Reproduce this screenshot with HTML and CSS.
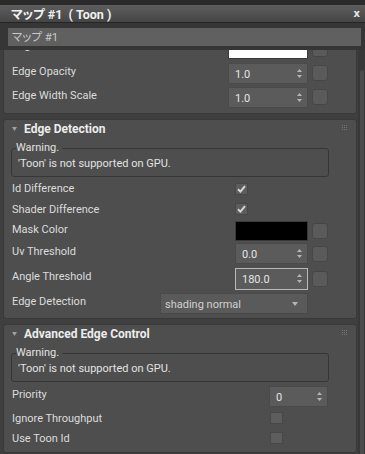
FILE: index.html
```html
<!DOCTYPE html>
<html>
<head>
<meta charset="utf-8">
<link rel="stylesheet" href="styles.css">
</head>
<body>
<div class="win">
  <div class="topstrip"></div>
  <div class="titlebar">
    <span class="title">マップ #1 &nbsp;( Toon )</span>
    <span class="close">x</span>
  </div>
  <div class="namebar"><div class="namefield">マップ #1</div></div>
  <div class="scrollwrap">
    <div class="viewport">
      <div class="panels">
        <section class="panel p1">
          <div class="row h24 up cut"><span class="lbl">Edge Color</span><div class="ctl"><div class="swatch white w80"></div><div class="btn"></div></div></div>
          <div class="row h24 up"><span class="lbl">Edge Opacity</span><div class="ctl"><div class="spin w80"><span>1.0</span><svg class="arr" width="5" height="9" viewBox="0 0 5 9"><polygon points="2.5,0 5,3 0,3" fill="#b5b5b5"/><polygon points="0,6 5,6 2.5,9" fill="#b5b5b5"/></svg></div><div class="btn"></div></div></div>
          <div class="row h24 up"><span class="lbl">Edge Width Scale</span><div class="ctl"><div class="spin w80"><span>1.0</span><svg class="arr" width="5" height="9" viewBox="0 0 5 9"><polygon points="2.5,0 5,3 0,3" fill="#b5b5b5"/><polygon points="0,6 5,6 2.5,9" fill="#b5b5b5"/></svg></div><div class="btn"></div></div></div>
        </section>

        <section class="panel p2">
          <div class="phead"><svg class="tri" width="5" height="4" viewBox="0 0 5 4"><polygon points="0,0 5,0 2.5,4" fill="#a0a0a0"/></svg><span class="ptitle">Edge Detection</span><svg class="grip" width="6" height="6" viewBox="0 0 6 6"><g fill="#767676"><rect x="0" y="0" width="1" height="1"/><rect x="2" y="0" width="1" height="1"/><rect x="4" y="0" width="1" height="1"/><rect x="0" y="2" width="1" height="1"/><rect x="2" y="2" width="1" height="1"/><rect x="4" y="2" width="1" height="1"/><rect x="0" y="4" width="1" height="1"/><rect x="2" y="4" width="1" height="1"/><rect x="4" y="4" width="1" height="1"/></g></svg></div>
          <fieldset class="warn"><legend>Warning.</legend><p>'Toon' is not supported on GPU.</p></fieldset>
          <div class="row h21"><span class="lbl">Id Difference</span><div class="ctl w93"><div class="chk"><svg width="9" height="8" viewBox="0 0 9 8"><path d="M1 4.2 L3.4 6.6 L8 1.2" fill="none" stroke="#d6d6d6" stroke-width="2"/></svg></div></div></div>
          <div class="row h20"><span class="lbl">Shader Difference</span><div class="ctl w93"><div class="chk"><svg width="9" height="8" viewBox="0 0 9 8"><path d="M1 4.2 L3.4 6.6 L8 1.2" fill="none" stroke="#d6d6d6" stroke-width="2"/></svg></div></div></div>
          <div class="row h24 up"><span class="lbl">Mask Color</span><div class="ctl"><div class="swatch black w73"></div><div class="btn"></div></div></div>
          <div class="row h21 up"><span class="lbl">Uv Threshold</span><div class="ctl"><div class="spin w73"><span>0.0</span><svg class="arr" width="5" height="9" viewBox="0 0 5 9"><polygon points="2.5,0 5,3 0,3" fill="#b5b5b5"/><polygon points="0,6 5,6 2.5,9" fill="#b5b5b5"/></svg></div><div class="btn"></div></div></div>
          <div class="row h29 up"><span class="lbl">Angle Threshold</span><div class="ctl"><div class="spin w73 focus"><span>180.0</span><svg class="arr" width="5" height="9" viewBox="0 0 5 9"><polygon points="2.5,0 5,3 0,3" fill="#b5b5b5"/><polygon points="0,6 5,6 2.5,9" fill="#b5b5b5"/></svg></div><div class="btn"></div></div></div>
          <div class="row h21 up"><span class="lbl">Edge Detection</span><div class="ctl"><div class="drop"><span>shading normal</span><svg width="6" height="4" viewBox="0 0 6 4"><polygon points="0,0 6,0 3,4" fill="#b5b5b5"/></svg></div><div class="btnslot"></div></div></div>
        </section>

        <section class="panel p3">
          <div class="phead"><svg class="tri" width="5" height="4" viewBox="0 0 5 4"><polygon points="0,0 5,0 2.5,4" fill="#a0a0a0"/></svg><span class="ptitle">Advanced Edge Control</span><svg class="grip" width="6" height="6" viewBox="0 0 6 6"><g fill="#767676"><rect x="0" y="0" width="1" height="1"/><rect x="2" y="0" width="1" height="1"/><rect x="4" y="0" width="1" height="1"/><rect x="0" y="2" width="1" height="1"/><rect x="2" y="2" width="1" height="1"/><rect x="4" y="2" width="1" height="1"/><rect x="0" y="4" width="1" height="1"/><rect x="2" y="4" width="1" height="1"/><rect x="4" y="4" width="1" height="1"/></g></svg></div>
          <fieldset class="warn"><legend>Warning.</legend><p>'Toon' is not supported on GPU.</p></fieldset>
          <div class="row h24 up first"><span class="lbl">Priority</span><div class="ctl"><div class="spin w59"><span>0</span><svg class="arr" width="5" height="9" viewBox="0 0 5 9"><polygon points="2.5,0 5,3 0,3" fill="#b5b5b5"/><polygon points="0,6 5,6 2.5,9" fill="#b5b5b5"/></svg></div></div></div>
          <div class="row h20"><span class="lbl">Ignore Throughput</span><div class="ctl w58"><div class="chk"></div></div></div>
          <div class="row h20"><span class="lbl">Use Toon Id</span><div class="ctl w58"><div class="chk"></div></div></div>
        </section>
      </div>
    </div>
    <div class="scrollbar"><div class="thumb"></div></div>
  </div>
</div>
</body>
</html>
```

FILE: styles.css
```css
* { box-sizing: border-box; }
html, body { margin: 0; padding: 0; }
body {
  width: 365px;
  height: 454px;
  overflow: hidden;
  background: #3f3f3f;
  font-family: Roboto, "Noto Sans CJK JP", sans-serif;
  font-size: 11px;
  color: #dcdcdc;
}
.win { display: flex; flex-direction: column; height: 454px; }
.topstrip { height: 5px; background: #2b2b2b; }
.titlebar {
  height: 18px;
  display: flex;
  align-items: center;
  justify-content: space-between;
  padding: 0 5px 0 11px;
  background: linear-gradient(#5e5e5e, #454545);
  border-bottom: 1px solid #262626;
}
.title {
  font-weight: bold;
  font-size: 12.5px;
  color: #f0f0f0;
  font-feature-settings: "palt";
  white-space: nowrap;
}
.close { font-family: "DejaVu Sans", sans-serif; font-weight: bold; font-size: 10px; color: #e8e8e8; }
.namebar { background: #363636; padding: 5px 4px 4px 8px; }
.namefield {
  height: 18px;
  background: #606060;
  color: #c9c9c9;
  padding-left: 4px;
  line-height: 18px;
  font-size: 11.5px;
  font-feature-settings: "palt";
  white-space: nowrap;
}
.scrollwrap { flex: 1; display: flex; min-height: 0; background: #3f3f3f; }
.viewport { flex: 1; overflow: hidden; }
.panels { margin-top: -14px; padding: 0 1px 0 3px; }
.panel {
  background: #4e4e4e;
  border: 1px solid #393939;
  border-radius: 3px;
  margin-bottom: 5px;
  padding-bottom: 4px;
}
.phead {
  height: 18px;
  display: flex;
  align-items: center;
  padding-left: 8px;
}
.tri { margin-right: 7px; margin-top: -1px; }
.ptitle { font-weight: bold; font-size: 12px; color: #ececec; flex: 1; }
.grip { margin-right: 8px; margin-top: -2px; }
.warn {
  margin: 4px 27px 0 7px;
  padding: 0 0 4px 6px;
  border: 1px solid #363636;
  border-radius: 3px;
  min-width: 0;
}
.warn legend {
  padding: 0 3px 0 0;
  margin-left: -2px;
  line-height: 12px;
  font-size: 11px;
  color: #e2e2e2;
}
.warn p { margin: 2px 0 0 0; line-height: 16px; font-size: 11px; color: #e2e2e2; }
.row {
  display: flex;
  align-items: center;
  padding: 0 28px 0 8px;
}
.h20 { height: 20px; }
.h21 { height: 21px; }
.h24 { height: 24px; }
.h29 { height: 29px; }
.p2 .warn + .row { margin-top: 1px; }
.p3 .warn + .row { margin-top: 2px; }
.lbl { flex: 1; white-space: nowrap; }
.up .lbl { padding-bottom: 4px; }
.up.cut .lbl { padding-bottom: 7px; }
.ctl { display: flex; align-items: center; }
.w93 { width: 93px; }
.w58 { width: 58px; }
.spin {
  height: 21px;
  background: #5b5b5b;
  border: 1px solid #4a4a4a;
  display: flex;
  align-items: center;
  justify-content: space-between;
  padding: 2px 5px 0 6px;
  color: #e4e4e4;
  font-size: 11px;
}
.spin .arr { margin-top: -2px; }
.spin.focus { border-color: #b8b8b8; height: 22px; }
.w80 { width: 80px; }
.w73 { width: 73px; }
.w59 { width: 59px; }
.swatch { height: 20px; border: 1px solid #3a3a3a; }
.swatch.white { background: #ffffff; }
.swatch.black { background: #000000; }
.btn {
  width: 16px;
  height: 16px;
  margin-left: 4px;
  background: #5a5a5a;
  border: 1px solid #464646;
  border-radius: 3px;
}
.btnslot { width: 16px; margin-left: 4px; }
.chk {
  width: 13px;
  height: 12px;
  background: #5d5d5d;
  border: 1px solid #474747;
  display: flex;
  align-items: center;
  justify-content: center;
}
.drop {
  width: 148px;
  height: 21px;
  background: #5a5a5a;
  border: 1px solid #4a4a4a;
  display: flex;
  align-items: center;
  justify-content: space-between;
  padding: 2px 9px 0 4px;
  color: #d0d0d0;
  font-size: 11px;
}
.drop svg { margin-top: -2px; }
.scrollbar { width: 7px; background: #383838; padding: 20px 1px 0 2px; }
.thumb { height: 100%; background: #4c4c4c; border-radius: 2px 2px 0 0; }
```
